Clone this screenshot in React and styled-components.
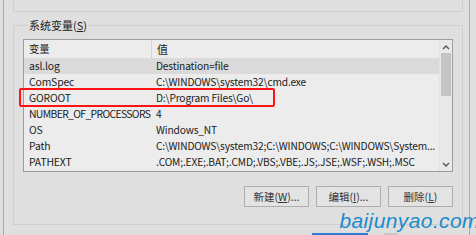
import React from "react";
import styled, { createGlobalStyle } from "styled-components";

const GlobalStyle = createGlobalStyle`
  html, body {
    margin: 0;
    padding: 0;
    background: #dfdfdf;
  }
  body {
    font-family: "Noto Sans CJK SC", "Noto Sans", sans-serif;
    font-size: 10px;
    color: #1a1a1a;
  }
`;

const Page = styled.div`
  position: relative;
  width: 476px;
  height: 235px;
  overflow: hidden;
  background: #dfdfdf;
`;

const Frame = styled.div`
  margin-left: 3px;
  width: 467px;
  height: 235px;
  border-left: 1px solid #a9a9a9;
  border-right: 1px solid #a9a9a9;
  padding-left: 9px;
  box-sizing: border-box;
`;

const PrevGroup = styled.div`
  width: 450px;
  height: 12px;
  border: 1px solid #cfcfcf;
  border-top: none;
  box-sizing: border-box;
`;

const Group = styled.fieldset`
  margin: 5px 0 0 0;
  width: 450px;
  height: 208px;
  box-sizing: border-box;
  border: 1px solid #cfcfcf;
  padding: 0 9px 0 9px;
`;

const Legend = styled.legend`
  padding: 0 1px;
  margin-left: 5px;
  font-size: 11px;
  line-height: 16px;
  color: #222;
`;

const ListBox = styled.div`
  margin-top: 6px;
  width: 430px;
  height: 133px;
  box-sizing: border-box;
  border: 1px solid #9c9c9c;
  background: #ececec;
  display: flex;
`;

const Rows = styled.div`
  flex: 1;
  min-width: 0;
  display: flex;
  flex-direction: column;
`;

const Row = styled.div`
  position: relative;
  display: grid;
  grid-template-columns: 127px 1fr;
  height: ${(p) => (p.$head ? "18px" : "16px")};
  line-height: ${(p) => (p.$head ? "18px" : "16px")};
  background: ${(p) => (p.$selected ? "#dadada" : "transparent")};
  white-space: nowrap;
`;

const Cell = styled.div`
  padding-left: 5px;
  overflow: hidden;
  border-left: ${(p) => (p.$divider ? "1px solid #d4d4d4" : "none")};
  font-size: ${(p) => (p.$divider ? "11px" : "10.4px")};
  letter-spacing: ${(p) => (p.$tight ? "-0.65px" : "-0.15px")};
`;

const ValueCell = styled(Cell)`
  font-size: 10.2px;
  letter-spacing: -0.15px;
`;

const Highlight = styled.div`
  position: absolute;
  left: -5px;
  top: -2px;
  width: 256px;
  height: 19px;
  box-sizing: border-box;
  border: 2px solid #ff1414;
  border-radius: 2px;
  pointer-events: none;
`;

const ScrollBar = styled.div`
  width: 12px;
  display: flex;
  flex-direction: column;
  align-items: center;
  background: #e9e9e9;
  border-left: 1px solid #e2e2e2;
`;

const Arrow = styled.div`
  height: 13px;
  display: flex;
  align-items: center;
  justify-content: center;
`;

const Thumb = styled.div`
  width: 10px;
  height: 43px;
  background: #c4c4c4;
`;

const Track = styled.div`
  flex: 1;
`;

const Buttons = styled.div`
  display: flex;
  justify-content: flex-end;
  gap: 7px;
  margin-top: 14px;
  width: 430px;
`;

const Button = styled.div`
  width: 65px;
  height: 21px;
  box-sizing: border-box;
  border: 1px solid #adadad;
  background: #e3e3e3;
  display: flex;
  align-items: center;
  justify-content: center;
  font-size: 10.5px;
  color: #333;
  u {
    text-decoration: underline;
  }
`;

const Watermark = styled.div`
  position: absolute;
  right: -4px;
  top: 209px;
  font-family: "Liberation Sans", sans-serif;
  font-style: italic;
  font-size: 21px;
  letter-spacing: 0.4px;
  color: #1b8bcb;
  line-height: 24px;
`;

const TaskStrip = styled.div`
  position: absolute;
  left: ${(p) => p.$left}px;
  width: ${(p) => p.$width}px;
  bottom: 0;
  height: 2px;
  background: ${(p) => p.$color};
`;

const Chevron = ({ up }) => (
  <svg width="8" height="6" viewBox="0 0 8 6">
    <path
      d={up ? "M1 5 L4 2 L7 5" : "M1 1 L4 4 L7 1"}
      fill="none"
      stroke="#555"
      strokeWidth="1.4"
    />
  </svg>
);

const vars = [
  ["asl.log", "Destination=file"],
  ["ComSpec", "C:\\WINDOWS\\system32\\cmd.exe"],
  ["GOROOT", "D:\\Program Files\\Go\\"],
  ["NUMBER_OF_PROCESSORS", "4"],
  ["OS", "Windows_NT"],
  ["Path", "C:\\WINDOWS\\system32;C:\\WINDOWS;C:\\WINDOWS\\System..."],
  ["PATHEXT", ".COM;.EXE;.BAT;.CMD;.VBS;.VBE;.JS;.JSE;.WSF;.WSH;.MSC"],
];

export default function App() {
  return (
    <>
      <GlobalStyle />
      <Page>
        <Frame>
          <PrevGroup />
          <Group>
            <Legend>
              系统变量(<u>S</u>)
            </Legend>
            <ListBox>
              <Rows>
                <Row $head>
                  <Cell>变量</Cell>
                  <Cell $divider>值</Cell>
                </Row>
                {vars.map(([name, value], i) => (
                  <Row key={name} $selected={i === 0}>
                    <Cell $tight={name.length > 16}>{name}</Cell>
                    <ValueCell>{value}</ValueCell>
                    {name === "GOROOT" && <Highlight />}
                  </Row>
                ))}
              </Rows>
              <ScrollBar>
                <Arrow>
                  <Chevron up />
                </Arrow>
                <Thumb />
                <Track />
                <Arrow>
                  <Chevron />
                </Arrow>
              </ScrollBar>
            </ListBox>
            <Buttons>
              <Button>
                新建(<u>W</u>)...
              </Button>
              <Button>
                编辑(<u>I</u>)...
              </Button>
              <Button>
                删除(<u>L</u>)
              </Button>
            </Buttons>
          </Group>
        </Frame>
        <Watermark>baijunyao.com</Watermark>
        <TaskStrip $left={312} $width={56} $color="#2a7fd4" />
        <TaskStrip $left={384} $width={14} $color="#c8c8c8" />
      </Page>
    </>
  );
}
